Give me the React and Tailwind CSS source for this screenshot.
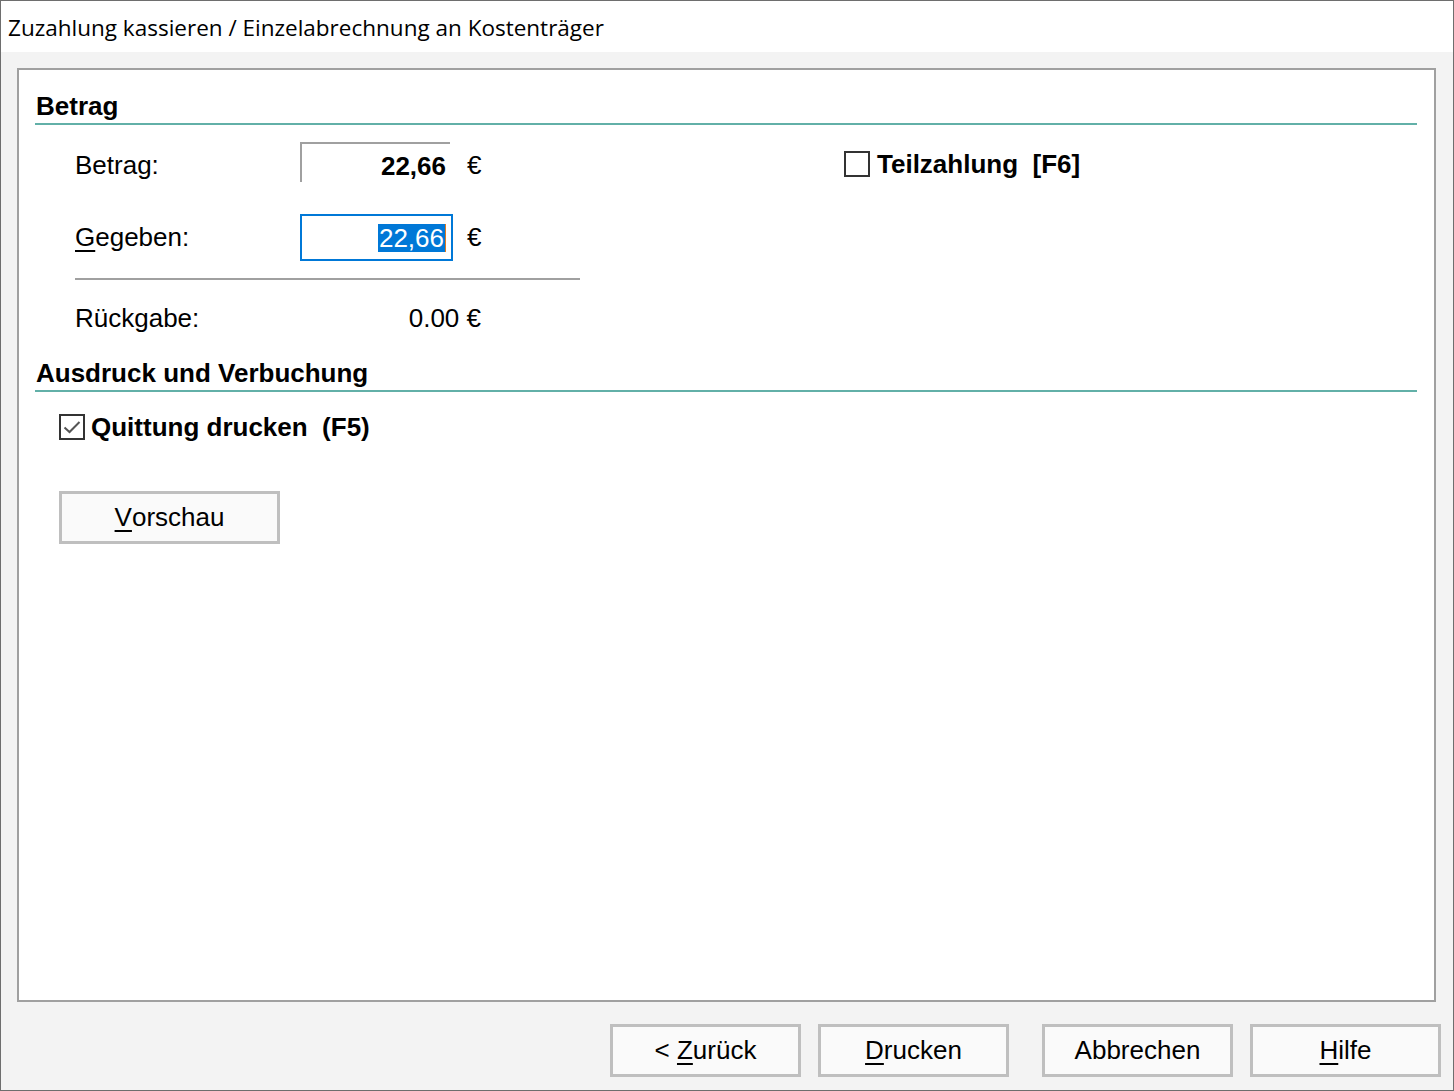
import React from 'react';

const font = { fontFamily: '"Liberation Sans", Arial, sans-serif' };

const Acc = ({ children }) => (
  <span className="underline decoration-[1.5px] underline-offset-[4px]">{children}</span>
);

const Check = ({ checked }) => (
  <div className="w-[26px] h-[26px] border-2 border-[#333333] bg-white flex items-center justify-center shrink-0">
    {checked && (
      <svg width="20" height="20" viewBox="0 0 20 20">
        <path d="M2.5 10.5 L7.5 15 L17.5 5" fill="none" stroke="#555555" strokeWidth="2" />
      </svg>
    )}
  </div>
);

const Heading = ({ children, className }) => (
  <div className={className}>
    <div className="pl-[17px] h-[32px] leading-[30px] text-[26px] font-bold text-black">{children}</div>
    <div className="ml-[16px] mr-[17px] h-[2px] bg-[#62b0a8]" />
  </div>
);

const WinButton = ({ children, className }) => (
  <button
    className={`w-[191px] h-[53px] border-[3px] border-[#bfbfbf] bg-[#fafafa] text-[26px] text-black flex items-center justify-center whitespace-pre ${className || ''}`}
  >
    {children}
  </button>
);

export default function App() {
  return (
    <div className="w-[1454px] h-[1091px] border border-[#6e6e6e] flex flex-col bg-[#f3f3f3] overflow-hidden">
      {/* title bar */}
      <div
        className="h-[51px] bg-white flex items-center pl-[7px] pt-[3px] text-[22.5px] text-black"
        style={{ fontFamily: '"Open Sans", "Noto Sans", sans-serif' }}
      >
        Zuzahlung kassieren / Einzelabrechnung an Kostenträger
      </div>

      <div className="flex-1 flex flex-col pl-[16px] pt-[16px]" style={font}>
        <div className="w-[1419px] h-[934px] border-2 border-[#a0a0a0] bg-white flex flex-col">
          <Heading className="mt-[21px]">Betrag</Heading>

          {/* Betrag row */}
          <div className="mt-[17px] flex items-center pl-[56px] h-[40px]">
            <div className="w-[769px] flex items-center">
              <div className="w-[225px] text-[26px] pt-[6px]">Betrag:</div>
              <div className="w-[150px] h-[40px] border-t-2 border-l-2 border-[#a0a0a0] flex items-center justify-end pr-[4px] pt-[6px] text-[26px] font-bold">
                22,66
              </div>
              <div className="ml-[17px] text-[26px] pt-[6px]">€</div>
            </div>
            <div className="pt-[4px] flex items-center">
              <Check />
              <div className="ml-[7px] text-[26px] font-bold whitespace-pre">Teilzahlung  [F6]</div>
            </div>
          </div>

          {/* Gegeben row */}
          <div className="mt-[32px] flex items-center pl-[56px] h-[47px]">
            <div className="w-[225px] text-[26px]">
              <Acc>G</Acc>egeben:
            </div>
            <div className="w-[153px] h-[47px] border-2 border-[#0078d7] flex items-center justify-end pr-[5px]">
              <span className="bg-[#0078d7] text-white text-[26px] h-[28px] leading-[28px] px-[1px] border-r border-[#e07a20]">22,66</span>
            </div>
            <div className="ml-[14px] text-[26px]">€</div>
          </div>

          <div className="mt-[17px] ml-[56px] w-[505px] h-[2px] bg-[#a0a0a0]" />

          {/* Rückgabe row */}
          <div className="mt-[18px] flex items-center pl-[56px] h-[40px]">
            <div className="w-[225px] text-[26px]">Rückgabe:</div>
            <div className="w-[181px] text-right text-[26px]">0.00 €</div>
          </div>

          <Heading className="mt-[20px]">Ausdruck und Verbuchung</Heading>

          <div className="mt-[20px] ml-[40px] h-[30px] flex items-center">
            <Check checked />
            <div className="ml-[6px] text-[26px] font-bold whitespace-pre">Quittung drucken  (F5)</div>
          </div>

          <button className="mt-[49px] ml-[40px] w-[221px] h-[53px] border-[3px] border-[#bfbfbf] bg-[#fafafa] text-[26px] text-black flex items-center justify-center">
            <Acc>V</Acc>orschau
          </button>
        </div>

        {/* bottom buttons */}
        <div className="mt-[22px] flex justify-end pr-[12px]">
          <WinButton>
            {'< '}
            <Acc>Z</Acc>urück
          </WinButton>
          <WinButton className="ml-[17px]">
            <Acc>D</Acc>rucken
          </WinButton>
          <WinButton className="ml-[33px]">Abbrechen</WinButton>
          <WinButton className="ml-[17px]">
            <Acc>H</Acc>ilfe
          </WinButton>
        </div>
      </div>
    </div>
  );
}
